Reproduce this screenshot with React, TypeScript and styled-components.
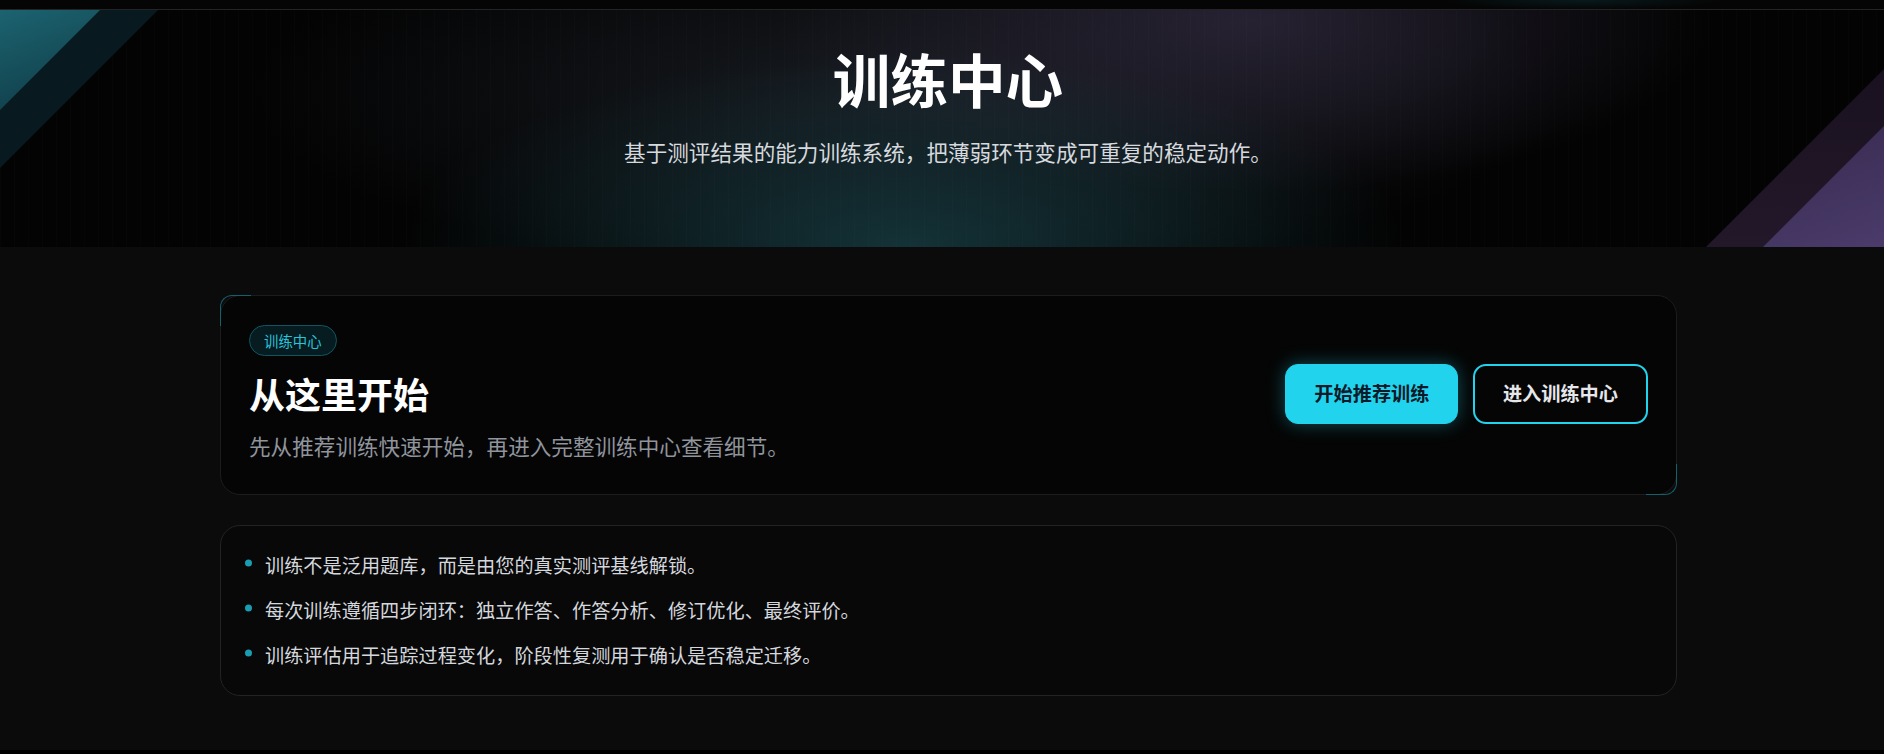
import React from 'react'
import styled, { createGlobalStyle } from 'styled-components'

const GlobalStyle = createGlobalStyle`
  * {
    box-sizing: border-box;
  }
  html,
  body {
    margin: 0;
    padding: 0;
    background: #000;
  }
  body {
    font-family: 'Noto Sans CJK SC', 'Noto Sans', sans-serif;
    color: #e5e7eb;
    -webkit-font-smoothing: antialiased;
  }
`

const TopStrip = styled.div`
  height: 10px;
  background:
    radial-gradient(ellipse 140px 10px at 84% 0%, rgba(34, 211, 238, 0.1), transparent),
    #050505;
  border-bottom: 1px solid #242424;
`

const Hero = styled.header`
  position: relative;
  overflow: hidden;
  height: 237px;
  padding: 34px 0 0 12px;
  display: flex;
  flex-direction: column;
  align-items: center;
  background-color: #030303;
  background-image:
    repeating-linear-gradient(90deg, rgba(255, 255, 255, 0.01) 0 1px, transparent 1px 14px),
    radial-gradient(ellipse 640px 250px at 48% 100%, rgba(22, 58, 64, 0.85), transparent 78%),
    radial-gradient(ellipse 600px 220px at 66% 5%, rgba(40, 35, 52, 0.95), transparent 78%),
    radial-gradient(ellipse 820px 230px at 48% 35%, rgba(24, 28, 34, 0.95), transparent 80%);
`

const Shard = styled.span<{ $corner: 'left' | 'right'; $size: number; $fill: string }>`
  position: absolute;
  width: ${(p) => p.$size}px;
  height: ${(p) => p.$size}px;
  background: ${(p) => p.$fill};
  ${(p) =>
    p.$corner === 'left'
      ? `top: 0; left: 0; clip-path: polygon(0 0, 100% 0, 0 100%);`
      : `bottom: 0; right: 0; clip-path: polygon(100% 0, 100% 100%, 0 100%);`}
`

const HeroTitle = styled.h1`
  position: relative;
  margin: 0 0 23px;
  font-size: 57.6px;
  line-height: 69px;
  font-weight: 700;
  color: #fff;
`

const HeroLead = styled.p`
  position: relative;
  margin: 0;
  font-size: 21.6px;
  line-height: 32.4px;
  color: #d6d9de;
`

const Main = styled.main`
  background: #0b0b0b;
  padding: 48px 207px 54px 220px;
  display: flex;
  flex-direction: column;
  gap: 30px;
`

const StartCard = styled.section`
  position: relative;
  display: flex;
  align-items: center;
  justify-content: space-between;
  padding: 29px 28px 32px;
  background: #050505;
  border: 1px solid #1c1c1c;
  border-radius: 20px;

  &::before,
  &::after {
    content: '';
    position: absolute;
    width: 30px;
    height: 30px;
    border: 0 solid #14606d;
  }
  &::before {
    top: -1px;
    left: -1px;
    border-top-width: 1px;
    border-left-width: 1px;
    border-top-left-radius: 12px;
  }
  &::after {
    bottom: -1px;
    right: -1px;
    border-bottom-width: 1px;
    border-right-width: 1px;
    border-bottom-right-radius: 12px;
  }
`

const StartText = styled.div`
  display: flex;
  flex-direction: column;
  align-items: flex-start;
`

const Badge = styled.span`
  display: inline-flex;
  align-items: center;
  height: 31px;
  padding: 0 14px;
  margin-bottom: 16px;
  border: 1px solid #0f5662;
  border-radius: 999px;
  background: #061c21;
  color: #29c4db;
  font-size: 14.4px;
`

const StartTitle = styled.h2`
  margin: 0 0 15px;
  font-size: 36px;
  line-height: 43px;
  font-weight: 700;
  color: #fff;
`

const StartDesc = styled.p`
  margin: 0;
  font-size: 21.6px;
  line-height: 32px;
  color: #8f949d;
`

const Actions = styled.div`
  display: flex;
  gap: 14.4px;
`

const ActionButton = styled.button<{ $variant: 'primary' | 'outline' }>`
  height: 60px;
  padding: 0 28px;
  border-radius: 13px;
  font-family: inherit;
  font-size: 19.2px;
  font-weight: 700;
  line-height: 1;
  cursor: pointer;
  ${(p) =>
    p.$variant === 'primary'
      ? `
    border: 1.5px solid #22d3ee;
    background: #22d3ee;
    color: #0d1a28;
    box-shadow: 0 0 18px rgba(34, 211, 238, 0.35);
  `
      : `
    border: 2px solid #22d3ee;
    background: transparent;
    color: #e6e7eb;
  `}
`

const NoteCard = styled.section`
  padding: 24px;
  background: #080808;
  border: 1px solid #232323;
  border-radius: 20px;
`

const NoteList = styled.ul`
  list-style: none;
  margin: 0;
  padding: 0;
  display: flex;
  flex-direction: column;
  gap: 14.4px;
`

const NoteItem = styled.li`
  display: flex;
  align-items: center;
  gap: 13px;
  font-size: 19.2px;
  line-height: 30.7px;
  color: #d4d7dd;

  &::before {
    content: '';
    flex: none;
    width: 7px;
    height: 7px;
    border-radius: 50%;
    background: #1a9db1;
    transform: translateY(-2.5px);
  }
`

const notes = [
  '训练不是泛用题库，而是由您的真实测评基线解锁。',
  '每次训练遵循四步闭环：独立作答、作答分析、修订优化、最终评价。',
  '训练评估用于追踪过程变化，阶段性复测用于确认是否稳定迁移。',
]

const App: React.FC = () => {
  return (
    <>
      <GlobalStyle />
      <TopStrip />
      <Hero>
        <Shard $corner="left" $size={158} $fill="#081a20" />
        <Shard $corner="left" $size={100} $fill="linear-gradient(160deg, #1c6370, #0e3843)" />
        <Shard $corner="right" $size={178} $fill="linear-gradient(180deg, #1a1120, #221829)" />
        <Shard $corner="right" $size={121} $fill="linear-gradient(160deg, #372a4e, #4a3b6b)" />
        <HeroTitle>训练中心</HeroTitle>
        <HeroLead>基于测评结果的能力训练系统，把薄弱环节变成可重复的稳定动作。</HeroLead>
      </Hero>
      <Main>
        <StartCard>
          <StartText>
            <Badge>训练中心</Badge>
            <StartTitle>从这里开始</StartTitle>
            <StartDesc>先从推荐训练快速开始，再进入完整训练中心查看细节。</StartDesc>
          </StartText>
          <Actions>
            <ActionButton $variant="primary">开始推荐训练</ActionButton>
            <ActionButton $variant="outline">进入训练中心</ActionButton>
          </Actions>
        </StartCard>
        <NoteCard>
          <NoteList>
            {notes.map((n) => (
              <NoteItem key={n}>{n}</NoteItem>
            ))}
          </NoteList>
        </NoteCard>
      </Main>
    </>
  )
}

export default App
